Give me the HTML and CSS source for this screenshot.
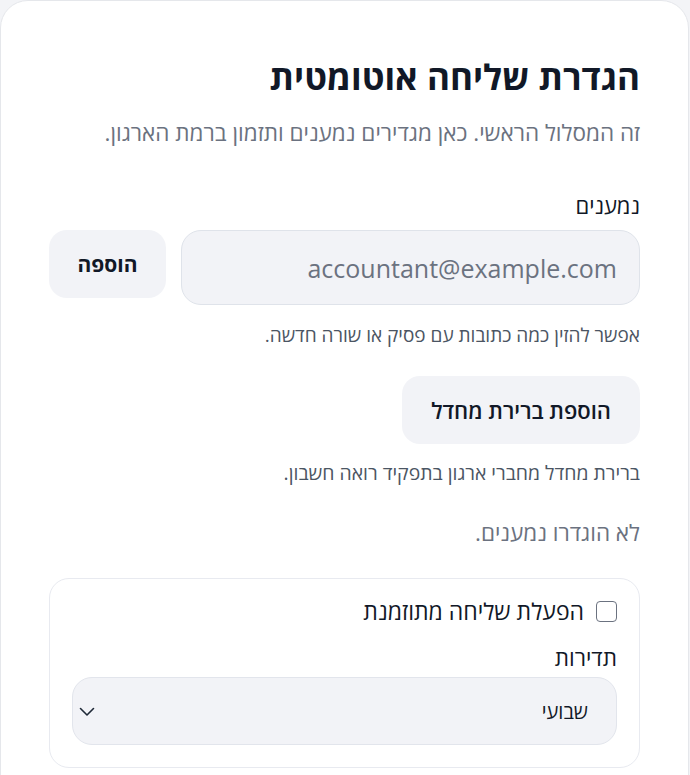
FILE: index.html
```html
<!DOCTYPE html>
<html lang="he" dir="rtl">
<head>
    <meta charset="UTF-8">
    <title>הגדרת שליחה אוטומטית</title>
    <link rel="stylesheet" href="styles.css">
</head>
<body>
    <div class="card">
        <h1 class="title">הגדרת שליחה אוטומטית</h1>
        <p class="subtitle">זה המסלול הראשי. כאן מגדירים נמענים ותזמון ברמת הארגון.</p>

        <label class="field-label" for="recipient">נמענים</label>
        <div class="add-row">
            <input type="text" id="recipient" class="text-input" placeholder="accountant@example.com" dir="ltr">
            <button class="soft-button">הוספה</button>
        </div>
        <p class="hint">אפשר להזין כמה כתובות עם פסיק או שורה חדשה.</p>

        <button class="soft-button default-button">הוספת ברירת מחדל</button>
        <p class="hint tight">ברירת מחדל מחברי ארגון בתפקיד רואה חשבון.</p>

        <p class="empty">לא הוגדרו נמענים.</p>

        <div class="schedule-box">
            <label class="check-row">
                <input type="checkbox" class="checkbox">
                <span>הפעלת שליחה מתוזמנת</span>
            </label>
            <label class="field-label small" for="frequency">תדירות</label>
            <div class="select-wrap">
                <select id="frequency" class="select">
                    <option>שבועי</option>
                    <option>יומי</option>
                    <option>חודשי</option>
                </select>
                <svg class="chevron" width="16" height="10" viewBox="0 0 16 10" fill="none" stroke="#1f2937" stroke-width="1.6" stroke-linecap="round" stroke-linejoin="round"><path d="M1.5 1.5L8 8l6.5-6.5"/></svg>
            </div>
        </div>
    </div>
</body>
</html>
```

FILE: styles.css
```css
body {
    font-family: "Open Sans", "Liberation Sans", sans-serif;
    margin: 0;
    padding: 0;
    background-color: #f3f4f7;
    color: #111827;
}

.card {
    background: white;
    border: 1px solid #e5e7eb;
    border-radius: 28px;
    margin-right: 1px;
    padding: 54px 48px 0;
    min-height: 800px;
}

.title {
    font-size: 35px;
    font-weight: 700;
    line-height: 44px;
    margin: 0;
    color: #111827;
}

.subtitle {
    font-size: 22.5px;
    line-height: 30px;
    color: #6b7280;
    margin: 19px 0 0;
}

.field-label {
    display: block;
    font-size: 22px;
    line-height: 30px;
    margin-top: 42px;
    margin-bottom: 10px;
}

.field-label.small {
    font-size: 22.5px;
    margin-top: 17px;
    margin-bottom: 4px;
}

.add-row {
    display: flex;
    align-items: flex-start;
    gap: 15px;
}

.text-input {
    flex: 1;
    height: 75px;
    box-sizing: border-box;
    border: 1px solid #dfe3ea;
    border-radius: 20px;
    background: #f2f3f7;
    padding: 0 22px;
    font-family: inherit;
    font-size: 25px;
    text-align: right;
    color: #111827;
}

.text-input::placeholder {
    color: #6b7280;
}

.soft-button {
    height: 68px;
    border: none;
    border-radius: 18px;
    background: #f2f3f7;
    padding: 0 28.5px;
    font-family: inherit;
    font-size: 21px;
    font-weight: 700;
    color: #111827;
    cursor: pointer;
}

.default-button {
    display: block;
    font-size: 22px;
    font-weight: 600;
    padding: 0 29px;
    margin-top: 27px;
}

.hint {
    font-size: 19px;
    line-height: 28px;
    color: #4b5563;
    margin: 16px 0 0;
}

.hint.tight {
    font-size: 19.4px;
    margin-top: 15px;
}

.empty {
    font-size: 22.5px;
    line-height: 30px;
    color: #6b7280;
    margin: 31px 0 0;
}

.schedule-box {
    margin-top: 30px;
    border: 1px solid #e8eaf0;
    border-radius: 20px;
    padding: 17px 22px 22px;
}

.check-row {
    display: flex;
    align-items: center;
    gap: 12px;
    font-size: 23px;
    line-height: 30px;
}

.checkbox {
    appearance: none;
    width: 21px;
    height: 21px;
    margin: 0;
    border: 1.5px solid #6b7280;
    border-radius: 4px;
    background: white;
}

.select-wrap {
    position: relative;
}

.select {
    appearance: none;
    width: 100%;
    height: 68px;
    border: 1px solid #e2e5ec;
    border-radius: 20px;
    background: #f2f3f7;
    padding: 0 28px;
    font-family: inherit;
    font-size: 20px;
    color: #111827;
}

.chevron {
    position: absolute;
    left: 7px;
    top: 30px;
}
```
